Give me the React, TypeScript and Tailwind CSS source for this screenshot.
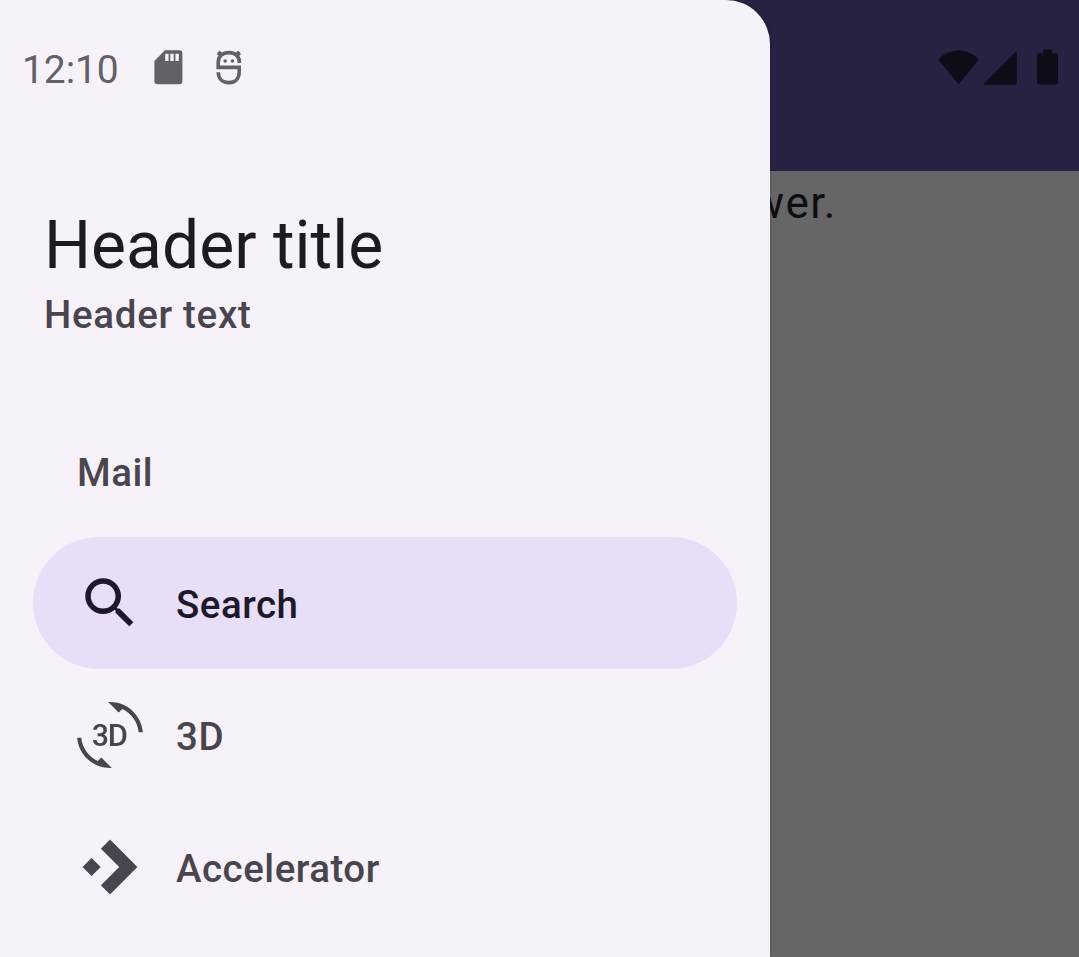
import type { ReactNode } from "react";
import { Md3dRotation, MdSearch } from "react-icons/md";

function SdCardIcon() {
  return (
    <svg width="29" height="35" viewBox="0 0 29 35" fill="currentColor">
      <path
        fillRule="evenodd"
        d="M10.9 0.3H25.2Q28.4 0.3 28.4 3.5V31Q28.4 34.3 25.2 34.3H3.6Q0.4 34.3 0.4 31V11ZM11.2 3.7V10.9H14.6V3.7ZM16.3 3.7V10.9H19.7V3.7ZM21.4 3.7V10.9H24.8V3.7Z"
      />
    </svg>
  );
}

function MascotIcon() {
  return (
    <svg width="26" height="36" viewBox="0 0 26 36" fill="none" stroke="currentColor" strokeWidth="3.6">
      <path d="M23.4 13V12.5C23.4 6.2 19.2 2.6 12.9 2.6S2.2 6.2 2.2 12.5V17.4H23.2V22C23.2 29 19 32.6 12.8 32.6S2.4 29 2.2 22.3" />
      <path d="M2.4 1.8L6.6 6M23.4 1.8L19.2 6" strokeWidth="3.4" />
      <path d="M1.6 5L4.4 2.2M24.2 5L21.4 2.2" strokeWidth="2" />
      <circle cx="9.2" cy="11" r="1.8" fill="currentColor" stroke="none" />
      <circle cx="16.4" cy="11" r="1.8" fill="currentColor" stroke="none" />
    </svg>
  );
}

function SystemIcons() {
  return (
    <svg width="122" height="38" viewBox="0 0 122 38" fill="currentColor">
      <path d="M20.6 36.4L0.3 11.6C5.5 6 12.5 2.5 20.6 2.5S35.7 6 40.9 11.6Z" />
      <path d="M44.8 36.7L78.8 2.8V36.7Z" />
      <path d="M105 1.5H114V5.2H118Q120 5.2 120 7.2V34.6Q120 36.6 118 36.6H101Q99 36.6 99 34.6V7.2Q99 5.2 101 5.2H105Z" />
    </svg>
  );
}

function AcceleratorIcon() {
  return (
    <svg width="66" height="66" viewBox="0 0 66 66" fill="currentColor">
      <path d="M5.5 33L14.6 23.9L23.7 33L14.6 42.1ZM33 5.5L60.4 33L33 60.4L23.9 51.3L42.2 33L23.9 14.7Z" />
    </svg>
  );
}

function DrawerItem({ icon, label, selected = false }: { icon: ReactNode; label: string; selected?: boolean }) {
  return (
    <div
      className={
        selected
          ? "flex h-[132px] items-center gap-[33px] rounded-full bg-[#e8def8] pl-11 text-[#1d192b]"
          : "flex h-[132px] items-center gap-[33px] rounded-full pl-11 text-[#49454f]"
      }
    >
      {icon}
      <span className="pt-[3px] text-[38.5px] leading-[55px] font-medium tracking-[0.5px]">{label}</span>
    </div>
  );
}

export default function App() {
  return (
    <div className="relative h-[957px] w-[1079px] overflow-hidden bg-[#666666] font-[Roboto,sans-serif]">
      <header className="flex h-[171px] justify-end bg-[#2a2042] pt-12 pr-[19px] text-[#0f0c18]">
        <SystemIcons />
      </header>
      <main className="pl-[751px] text-[44px] leading-[65px] tracking-[1.375px] text-[#0e0e0f]">wer.</main>

      <aside className="absolute inset-y-0 left-0 w-[770px] rounded-tr-[44px] bg-[#f7f2fa] shadow-[0_0_3px_rgba(0,0,0,0.3)]">
        <div className="flex h-[171px] items-start pt-[50px] pl-[22px] text-[#646166]">
          <span className="-mt-px w-[132px] text-[39px] leading-[42px] tracking-[-0.1px]">12:10</span>
          <SdCardIcon />
          <div className="pl-[33px]">
            <MascotIcon />
          </div>
        </div>
        <div className="h-[234px] px-11 pt-[31px]">
          <h1 className="text-[66px] leading-[88px] text-[#1c1b1f]">Header title</h1>
          <p className="text-[38.5px] leading-[50px] font-medium tracking-[0.7px] text-[#49454f]">Header text</p>
        </div>
        <nav className="px-[33px]">
          <h2 className="flex h-[132px] items-center pt-[3px] pl-11 text-[38.5px] font-medium tracking-[0.5px] text-[#49454f]">
            Mail
          </h2>
          <DrawerItem icon={<MdSearch size={66} />} label="Search" selected />
          <DrawerItem icon={<Md3dRotation size={66} />} label="3D" />
          <DrawerItem icon={<AcceleratorIcon />} label="Accelerator" />
        </nav>
      </aside>
    </div>
  );
}
